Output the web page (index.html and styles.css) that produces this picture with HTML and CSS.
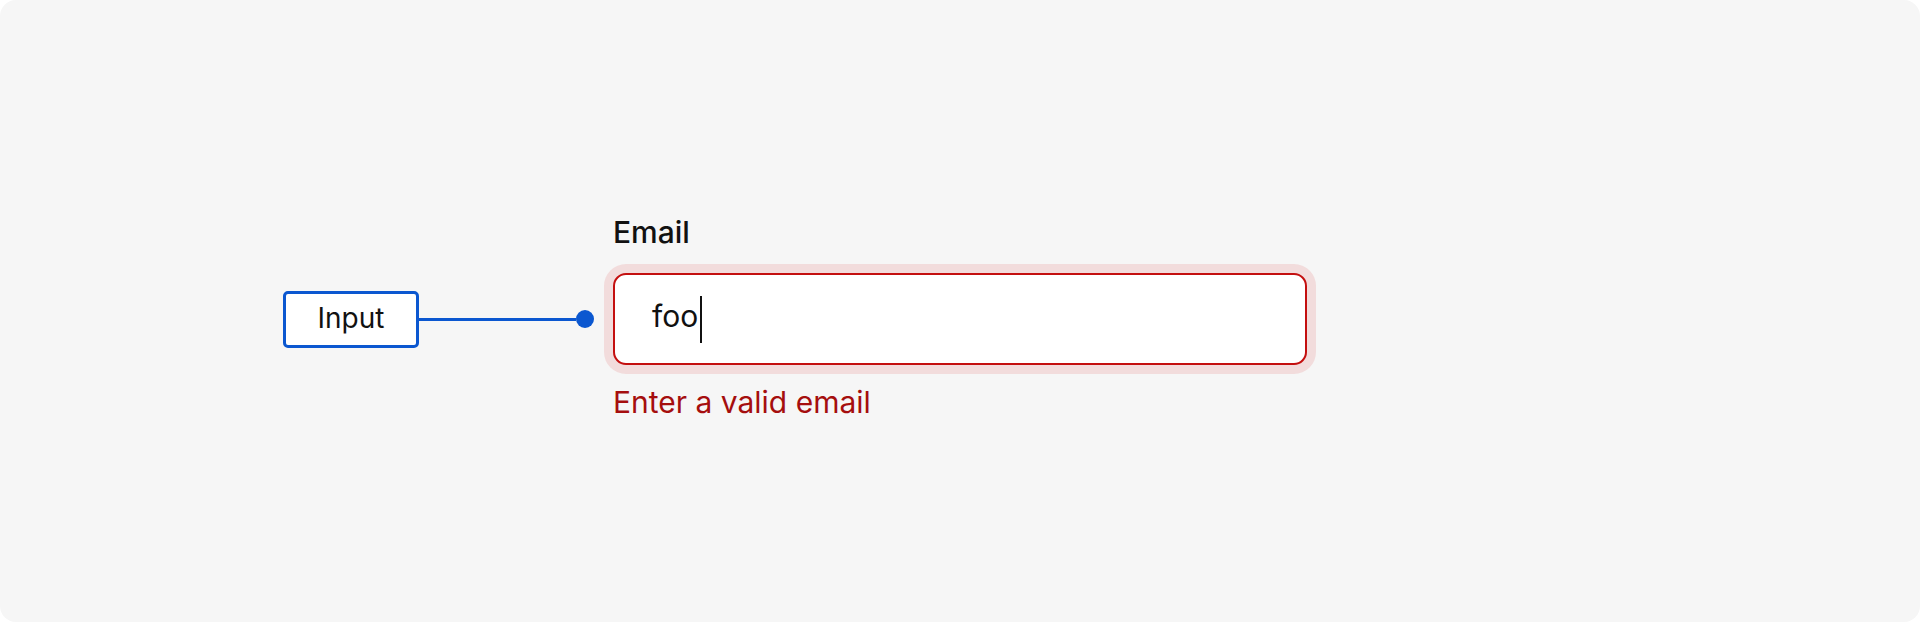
FILE: index.html
```html
<!DOCTYPE html>
<html lang="en">
<head>
    <meta charset="UTF-8">
    <meta name="viewport" content="width=device-width, initial-scale=1.0">
    <title>Input anatomy</title>
    <link rel="stylesheet" href="styles.css">
</head>
<body>
    <div class="canvas">
        <div class="diagram">
            <!-- field label -->
            <div class="field-label">Email</div>

            <!-- callout tag and connector -->
            <div class="tag">Input</div>
            <div class="connector"></div>
            <div class="dot"></div>

            <!-- the text field in error state -->
            <div class="field">
                <span class="value">foo</span>
                <span class="caret"></span>
            </div>

            <div class="error">Enter a valid email</div>
        </div>
    </div>
</body>
</html>
```

FILE: styles.css
```css
body {
    margin: 0;
    background: #ffffff;
    font-family: 'Inter', 'Liberation Sans', sans-serif;
}

.canvas {
    width: 1920px;
    height: 622px;
    box-sizing: border-box;
    background: #f6f6f6;
    border-radius: 16px;
    padding: 214px 0 0 283px;
}

.diagram {
    display: grid;
    grid-template-columns: 136px 157px 18px 19px 694px;
    grid-template-rows: auto 92px auto;
    align-items: center;
}

.field-label {
    grid-column: 5;
    grid-row: 1;
    font-size: 30px;
    font-weight: 500;
    line-height: 36px;
    color: #111111;
    margin-bottom: 23px;
}

.tag {
    grid-column: 1;
    grid-row: 2;
    height: 57px;
    box-sizing: border-box;
    border: 3px solid #0b57d0;
    border-radius: 5px;
    background: #ffffff;
    display: flex;
    align-items: center;
    justify-content: center;
    font-size: 28px;
    color: #111111;
    padding-bottom: 2px;
}

.connector {
    grid-column: 2;
    grid-row: 2;
    height: 3px;
    background: #0b57d0;
}

.dot {
    grid-column: 3;
    grid-row: 2;
    width: 18px;
    height: 18px;
    border-radius: 50%;
    background: #0b57d0;
}

.field {
    grid-column: 5;
    grid-row: 2;
    height: 92px;
    box-sizing: border-box;
    border: 2px solid #c40f0f;
    border-radius: 13px;
    background: #ffffff;
    box-shadow: 0 0 0 9px #f2dcdc;
    display: flex;
    align-items: center;
    padding: 0 0 0 37px;
}

.value {
    font-size: 30px;
    line-height: 30px;
    color: #111111;
    margin-bottom: 6px;
}

.caret {
    width: 2px;
    height: 47px;
    background: #111111;
    margin-left: 2px;
}

.error {
    grid-column: 5;
    grid-row: 3;
    font-size: 30px;
    line-height: 36px;
    color: #a50e0e;
    margin-top: 19px;
}
```
